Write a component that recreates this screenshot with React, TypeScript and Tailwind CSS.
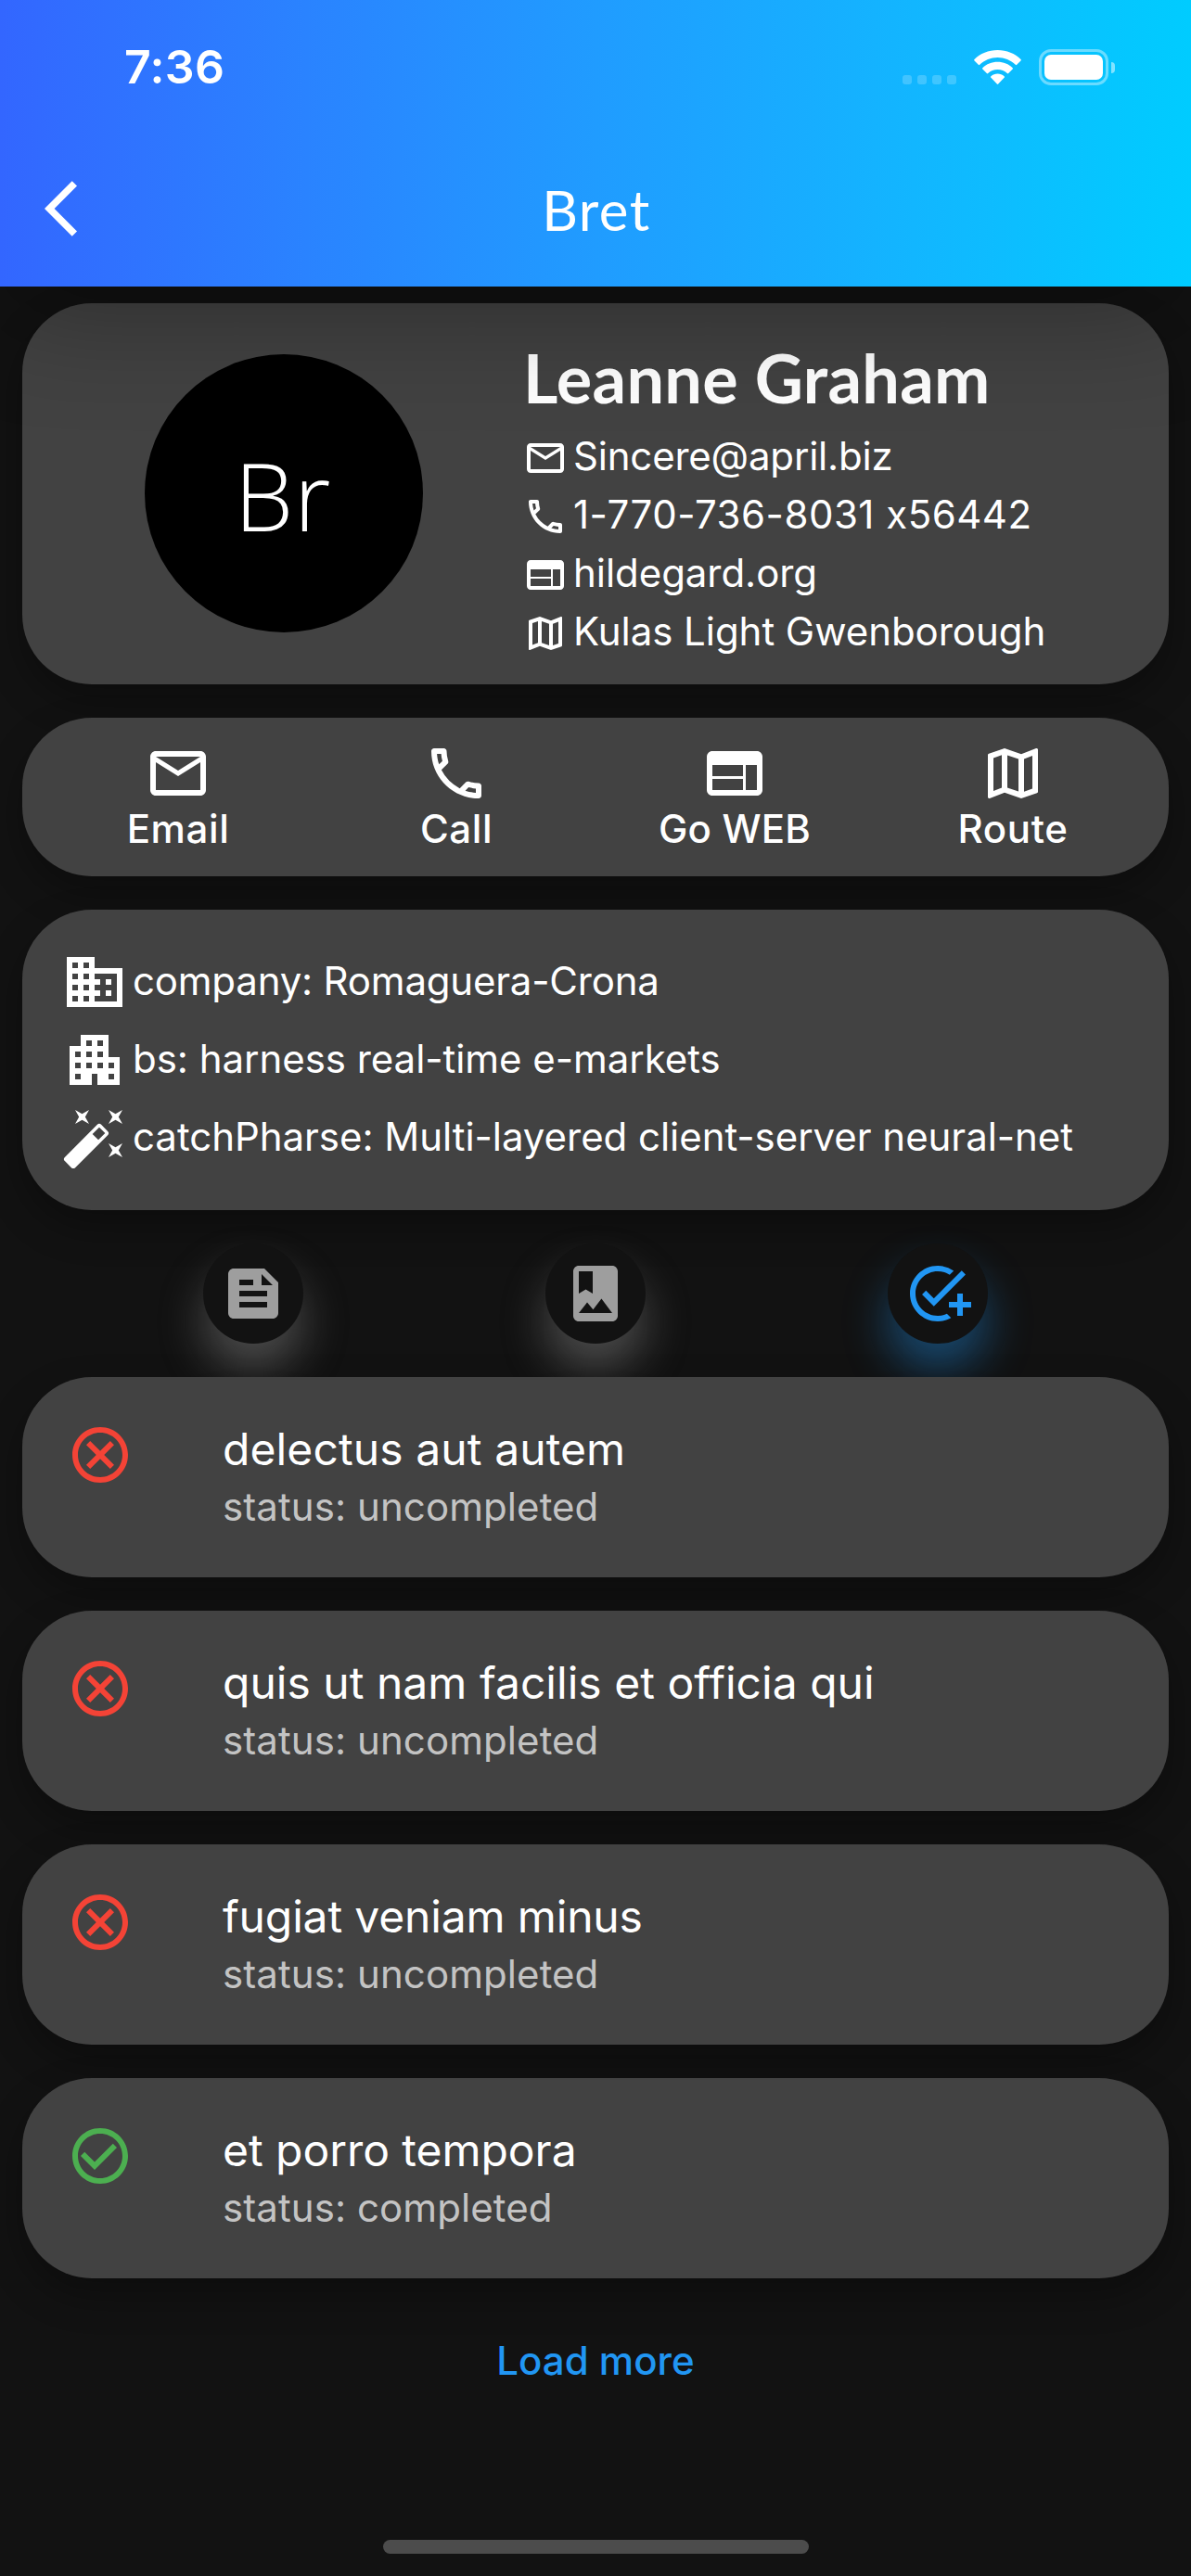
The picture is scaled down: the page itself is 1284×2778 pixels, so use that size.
import type { IconType } from "react-icons";
import {
  MdAddTask,
  MdApartment,
  MdAutoFixHigh,
  MdBusiness,
  MdCheckCircleOutline,
  MdFeed,
  MdOutlineCall,
  MdOutlineCancel,
  MdOutlineEmail,
  MdOutlineMap,
  MdWeb,
} from "react-icons/md";

const card =
  "mx-6 rounded-[75px] bg-[#424242] shadow-[0_18px_42px_rgba(0,0,0,0.3)]";

const contacts: { icon: IconType; text: string; tracking: string }[] = [
  { icon: MdOutlineEmail, text: "Sincere@april.biz", tracking: "tracking-[-0.2px]" },
  { icon: MdOutlineCall, text: "1-770-736-8031 x56442", tracking: "tracking-[0.5px]" },
  { icon: MdWeb, text: "hildegard.org", tracking: "tracking-[-0.05px]" },
  { icon: MdOutlineMap, text: "Kulas Light Gwenborough", tracking: "tracking-[-0.05px]" },
];

const actions: { icon: IconType; label: string; tracking: string }[] = [
  { icon: MdOutlineEmail, label: "Email", tracking: "tracking-[0.6px]" },
  { icon: MdOutlineCall, label: "Call", tracking: "tracking-[0.6px]" },
  { icon: MdWeb, label: "Go WEB", tracking: "tracking-[0.2px]" },
  { icon: MdOutlineMap, label: "Route", tracking: "tracking-[0.6px]" },
];

const company: { icon: IconType; text: string; tracking: string }[] = [
  { icon: MdBusiness, text: "company: Romaguera-Crona", tracking: "tracking-[-0.2px]" },
  { icon: MdApartment, text: "bs: harness real-time e-markets", tracking: "tracking-[-0.04px]" },
  {
    icon: MdAutoFixHigh,
    text: "catchPharse: Multi-layered client-server neural-net",
    tracking: "tracking-[-0.04px]",
  },
];

const todos = [
  { title: "delectus aut autem", done: false, tracking: "tracking-[0.1px]" },
  { title: "quis ut nam facilis et officia qui", done: false, tracking: "tracking-[0.02px]" },
  { title: "fugiat veniam minus", done: false, tracking: "tracking-[-0.15px]" },
  { title: "et porro tempora", done: true, tracking: "tracking-[-0.04px]" },
];

function StatusIcons() {
  return (
    <div className="flex h-[39px] items-end">
      <div className="mb-px flex gap-[6px]">
        {[0, 1, 2, 3].map((i) => (
          <span key={i} className="size-[10px] rounded-[3px] bg-white/20" />
        ))}
      </div>
      <svg className="mb-px ml-[19px] h-[37px] w-[51px]" viewBox="0 0 51 37" fill="#fff">
        <path d="M25.5 0C35.3 0 44.3 3.8 50.5 10a1 1 0 0 1 0 1.4l-4.3 4.4a1 1 0 0 1-1.4 0C39.7 10.800 32.800 7.900 25.500 7.900S11.300 10.800 6.200 15.800a1 1 0 0 1-1.400 0L.5 11.400a1 1 0 0 1 0-1.400C6.700 3.800 15.700 0 25.500 0Z" />
        <path d="M25.5 12.8c6.300 0 12 2.400 16.200 6.400a1 1 0 0 1 0 1.400l-4.500 4.500a1 1 0 0 1-1.400 0c-2.700-2.500-6.300-4-10.300-4s-7.600 1.500-10.300 4a1 1 0 0 1-1.400 0l-4.500-4.500a1 1 0 0 1 0-1.400c4.200-4 9.900-6.400 16.200-6.400Z" />
        <path d="M25.5 25.5c2.700 0 5.200 1 7.100 2.700a1 1 0 0 1 0 1.500l-6.400 6.900a1 1 0 0 1-1.400 0l-6.400-6.900a1 1 0 0 1 0-1.500c1.900-1.700 4.400-2.700 7.100-2.700Z" />
      </svg>
      <div className="ml-[19px] h-[39px] w-[75px] rounded-[13px] border-[3px] border-white/40 p-[3px]">
        <div className="h-[27px] w-[63px] rounded-[7px] bg-white" />
      </div>
      <span className="mb-[13px] ml-[3px] h-[12px] w-[4px] rounded-r-full bg-white/50" />
    </div>
  );
}

function Header() {
  return (
    <header className="relative z-10 h-[309px] bg-linear-to-r from-[#3366ff] to-[#00ccff] shadow-[0_30px_120px_rgba(0,0,0,0.31)]">
      <div className="flex h-[145px] items-center justify-between pr-[82px] pl-[134px]">
        <span className="text-[50px] font-semibold tracking-[0.4px]">7:36</span>
        <StatusIcons />
      </div>
      <div className="grid h-[160px] grid-cols-[1fr_auto_1fr] items-center">
        <svg className="ml-12 h-[60px] w-[36px]" viewBox="0 0 12 20" fill="#fff">
          <path d="M11.67 1.87 9.9.1 0 10l9.9 9.9 1.77-1.77L3.54 10z" />
        </svg>
        <h1 className="pt-px pl-[2px] font-['Lato'] text-[60px] leading-[80px] tracking-[1.5px]">
          Bret
        </h1>
      </div>
    </header>
  );
}

function Profile() {
  return (
    <section className={`${card} mt-[18px] flex h-[411px]`}>
      <div className="mt-[55px] ml-[132px] flex size-[300px] items-center justify-center rounded-full bg-black pt-[5px] pr-[2px]">
        <span className="font-['Open_Sans'] text-[101px] leading-none font-light tracking-[1px]">
          Br
        </span>
      </div>
      <div className="ml-[108px] pt-[37px]">
        <h2 className="font-['Lato'] text-[72px] leading-[86px] font-bold tracking-[0.3px]">
          Leanne Graham
        </h2>
        <ul className="mt-[13px] flex flex-col gap-px">
          {contacts.map(({ icon: Icon, text, tracking }) => (
            <li key={text} className="flex h-[62px] items-center">
              <Icon className="size-12" />
              <span className={`ml-[6px] self-start leading-[57px] ${tracking}`}>{text}</span>
            </li>
          ))}
        </ul>
      </div>
    </section>
  );
}

function Actions() {
  return (
    <nav className={`${card} mt-9 grid h-[171px] grid-cols-4 px-[18px] pt-6`}>
      {actions.map(({ icon: Icon, label, tracking }) => (
        <button key={label} className="flex flex-col items-center">
          <Icon className="size-[72px]" />
          <span className={`leading-[47px] font-medium ${tracking}`}>{label}</span>
        </button>
      ))}
    </nav>
  );
}

function Company() {
  return (
    <section className={`${card} mt-9 flex h-[324px] flex-col gap-3 px-[42px] pt-[42px]`}>
      {company.map(({ icon: Icon, text, tracking }) => (
        <div key={text} className="flex h-[72px]">
          <Icon className="size-[72px]" />
          <span className={`ml-[5px] leading-[69px] ${tracking}`}>{text}</span>
        </div>
      ))}
    </section>
  );
}

function PhotoAlbumIcon() {
  return (
    <svg className="size-[72px]" viewBox="0 0 24 24" fill="currentColor">
      <path d="M18 2H6c-1.1 0-2 .9-2 2v16c0 1.1.9 2 2 2h12c1.1 0 2-.9 2-2V4c0-1.1-.9-2-2-2zM6 4h5v8l-2.5-1.5L6 12V4zm0 15l3-3.86 2.14 2.58 3-3.86L18 19H6z" />
    </svg>
  );
}

function Tabs() {
  const base = "flex size-[108px] items-center justify-center rounded-full bg-[#121212]";
  const idle = "text-[#9e9e9e] shadow-[0_30px_48px_rgba(158,158,158,0.4)]";
  const active = "text-[#2196f3] shadow-[0_30px_48px_rgba(33,150,243,0.4)]";
  return (
    <div className="flex h-[180px] justify-between px-[219px] pt-9">
      <button className={`${base} ${idle}`}>
        <MdFeed className="size-[72px]" />
      </button>
      <button className={`${base} ${idle}`}>
        <PhotoAlbumIcon />
      </button>
      <button className={`${base} ${active}`}>
        <MdAddTask className="size-[72px]" />
      </button>
    </div>
  );
}

function Todos() {
  return (
    <ul className="relative flex flex-col gap-9">
      {todos.map(({ title, done, tracking }) => (
        <li key={title} className={`${card} flex h-[216px] pt-12 pl-12`}>
          {done ? (
            <MdCheckCircleOutline className="size-[72px] text-[#4caf50]" />
          ) : (
            <MdOutlineCancel className="size-[72px] text-[#f44336]" />
          )}
          <div className="ml-24">
            <p className={`text-[48px] leading-[59px] ${tracking}`}>{title}</p>
            <p className="mt-[7px] leading-[51px] tracking-[0.08px] text-white/70">
              status: {done ? "completed" : "uncompleted"}
            </p>
          </div>
        </li>
      ))}
    </ul>
  );
}

export default function App() {
  return (
    <main className="h-[2778px] w-[1284px] overflow-hidden bg-[#121212] font-['Inter',sans-serif] text-[42px] text-white">
      <Header />
      <Profile />
      <Actions />
      <Company />
      <Tabs />
      <Todos />
      <div className="mt-[63px] flex justify-center">
        <button className="leading-[51px] font-medium text-[#2196f3]">Load more</button>
      </div>
      <div className="mx-auto mt-[168px] h-[15px] w-[459px] rounded-full bg-[#4c4c4c]" />
    </main>
  );
}
